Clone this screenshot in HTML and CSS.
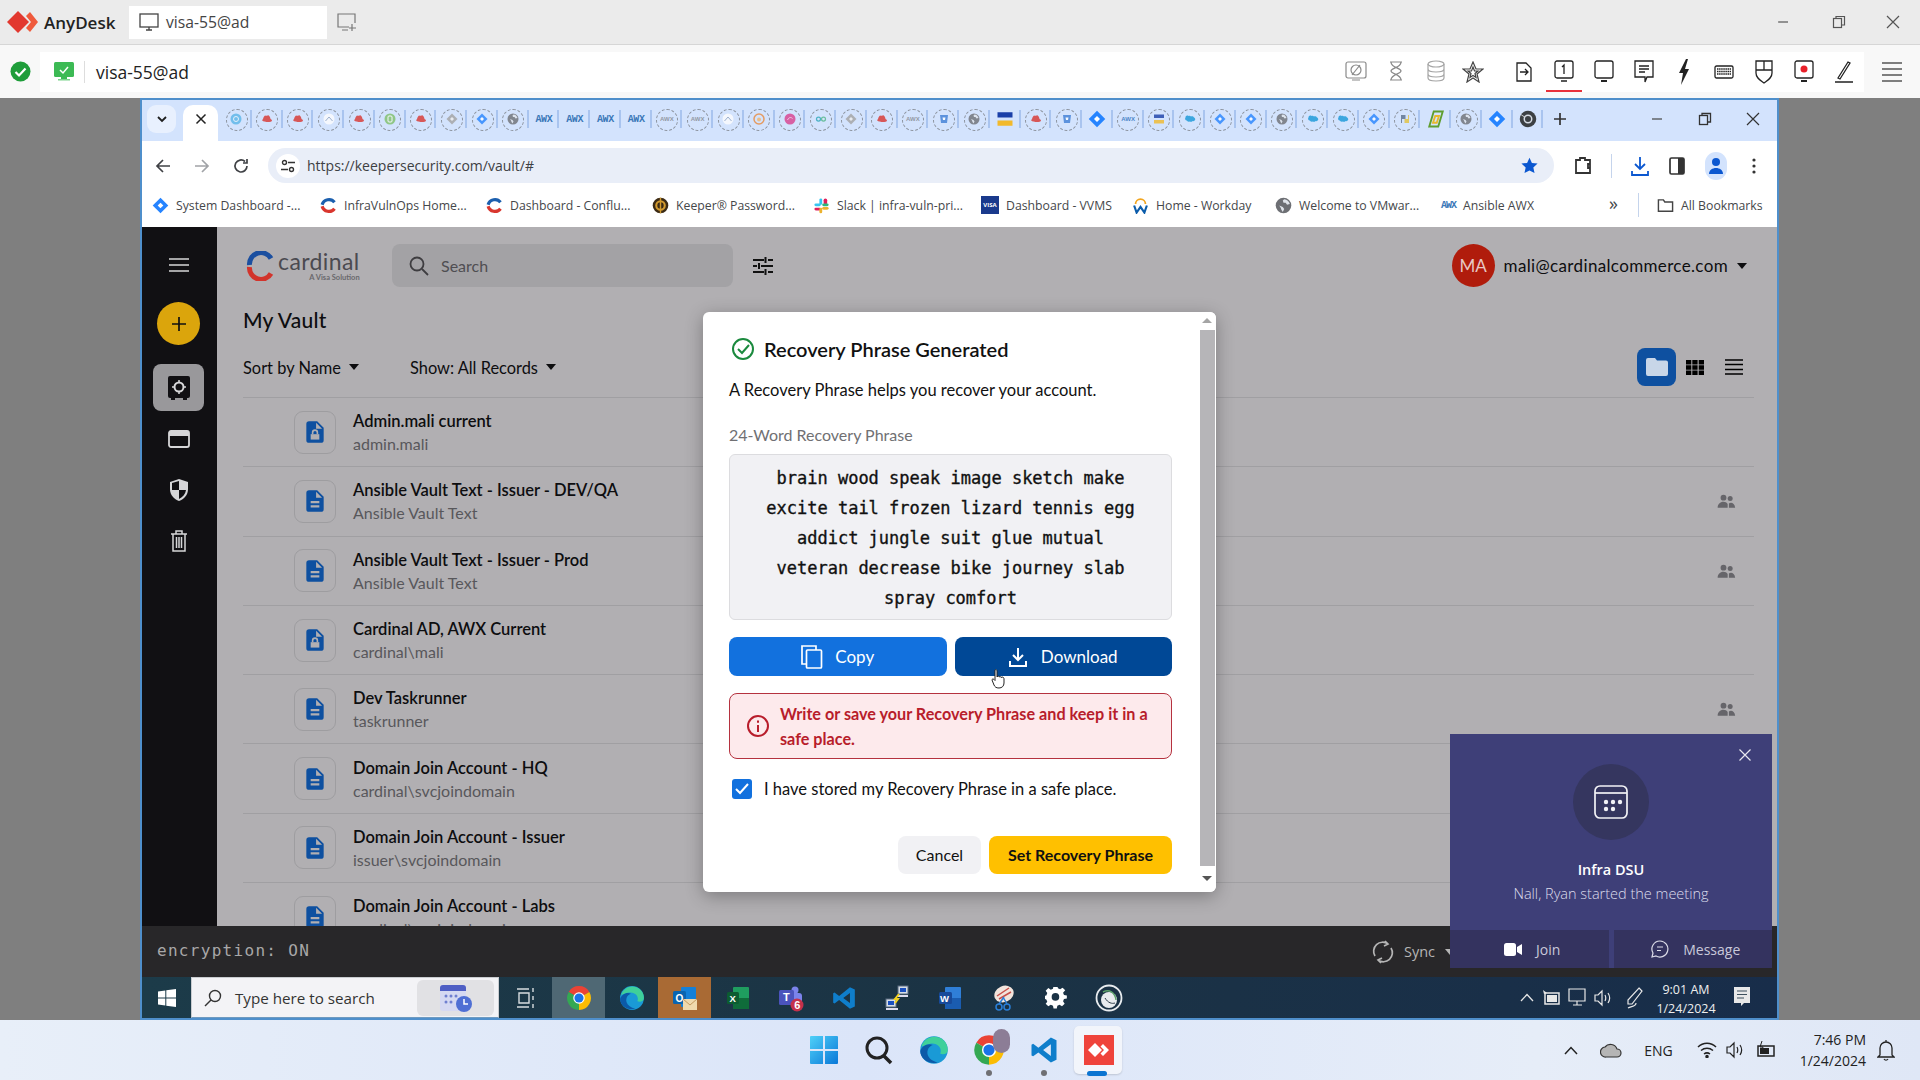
FILE: index.html
```html
<!DOCTYPE html>
<html lang="en">
<head>
    <meta charset="UTF-8">
    <title>AnyDesk - visa-55@ad</title>
    <link rel="stylesheet" href="styles.css">
</head>
<body>
<svg class="defs" width="0" height="0">
    <symbol id="i-redhat" viewBox="0 0 24 24"><path fill="#d8352f" d="M4 13c0-3 2-7 4-8 2 .8 5 .8 7-.4 2 1.4 3.600 4.400 4 7.400 2 1 3 2 3 3 0 2-4 3-9 3s-11-2-11-4c0-1 1-1.500 2-1z"/></symbol>
    <symbol id="i-diamond" viewBox="0 0 24 24"><path fill="#2684ff" d="M12 1l11 11-11 11L1 12z"/><path fill="#fff" d="M12 8l4 4-4 4-4-4z"/></symbol>
    <symbol id="i-graydiamond" viewBox="0 0 24 24"><path fill="#a3a3a3" d="M12 1l11 11-11 11L1 12z"/><path fill="#eee" d="M12 8l4 4-4 4-4-4z"/></symbol>
    <symbol id="i-globe" viewBox="0 0 24 24"><circle cx="12" cy="12" r="11" fill="#6d6f74"/><path fill="#dfe3ea" d="M13 3c4 .5 7 3 8 7l-4 1-2-3h-3l-1-3zM6 12l5 2 2 3-2 4-2-3-1-3z"/></symbol>
    <symbol id="i-cloud" viewBox="0 0 24 24"><path fill="#1798d8" d="M9 6c2-1 4 0 5 1 2-1 5 0 6 2 2 1 3 3 2 5s-3 3-5 2c-1 2-4 2-6 1-2 1-5 0-5-2-3 0-5-3-3-6 0-3 3-5 6-3z"/></symbol>
    <symbol id="i-shield" viewBox="0 0 24 24"><path fill="#3f7fd6" d="M4 4h16l-2 16H6z"/><path fill="#fff" d="M9 9h6l-1 5h-4z"/></symbol>
    <symbol id="i-flag" viewBox="0 0 24 24"><rect x="2" y="3" width="20" height="7" fill="#1a3fa8"/><rect x="2" y="14" width="20" height="7" fill="#f2b92b"/></symbol>
    <symbol id="i-peak" viewBox="0 0 24 24"><circle cx="12" cy="12" r="11" fill="#fdfdfd"/><path fill="none" stroke="#8fa4c4" stroke-width="2" d="M5 16l7-8 7 8"/></symbol>
    <symbol id="i-doc" viewBox="0 0 24 24"><path fill="#0e50a0" d="M14 2H6.500A2.500 2.500 0 0 0 4 4.500v15A2.500 2.500 0 0 0 6.500 22h11a2.500 2.500 0 0 0 2.500-2.500V8l-6-6zm2 16H8v-2h8v2zm0-4H8v-2h8v2zm-3-5V3.500L18.500 9H13z"/></symbol>
    <symbol id="i-doclock" viewBox="0 0 24 24"><path fill="#0e50a0" d="M14 2H6.500A2.500 2.500 0 0 0 4 4.500v15A2.500 2.500 0 0 0 6.500 22h11a2.500 2.500 0 0 0 2.500-2.500V8l-6-6zm-1 7V3.500L18.500 9H13z"/><path fill="#b1afb2" d="M8 14h8v5H8z"/><path fill="none" stroke="#b1afb2" stroke-width="1.500" d="M9.800 14v-1.500a2.200 2.200 0 0 1 4.400 0V14"/></symbol>
    <symbol id="i-people" viewBox="0 0 24 24"><circle cx="9" cy="8" r="3.500"/><circle cx="17" cy="9" r="3"/><path d="M2 20c0-4 3-7 7-7 2 0 4 1 5 2.500V20zM15.500 20v-5c2-2 7-1 7.500 5z"/></symbol>
    <symbol id="i-chrome" viewBox="0 0 24 24"><path fill="#ea4335" d="M12 12L2.470 6.500A11 11 0 0 1 21.530 6.500z"/><path fill="#fbbc04" d="M12 12l9.530-5.500A11 11 0 0 1 12 23z"/><path fill="#34a853" d="M12 12v11A11 11 0 0 1 2.470 6.500z"/><circle cx="12" cy="12" r="5.300" fill="#fff"/><circle cx="12" cy="12" r="4.200" fill="#1a73e8"/></symbol>
    <symbol id="i-vscode" viewBox="0 0 24 24"><path fill="#0f7ecb" d="M17.500 2L22 4.200v15.600L17.500 22 7.500 13.900 3.300 17 2 16.300V7.700L3.300 7l4.200 3.100zm0 5.300L11.300 12l6.200 4.700z"/></symbol>
    <symbol id="i-edge" viewBox="0 0 24 24"><circle cx="12" cy="12" r="11" fill="#1a9ad6"/><path fill="#3fd09a" d="M2 9C4 3 10 0 16 2c4 1.500 7 5 7 10 0 3-3 4-6 3 2-5-3-9-8-8-3 .5-5 2-7 2z"/><path fill="#0c5aa8" d="M1 13c1-4 6-7 10-5-3 1-5 4-4 8 1 3 4 5 8 6-7 2-14-3-14-9z"/></symbol>
    <symbol id="i-cpart" viewBox="0 0 24 24"><path fill="none" stroke="#1b5fae" stroke-width="4.500" d="M20.500 7.500A10 10 0 0 0 3 11"/><path fill="none" stroke="#d9362e" stroke-width="4.500" d="M3 13a10 10 0 0 0 17.500 3.500"/></symbol>
</svg>

<header class="ad-title">
    <svg class="ad-logo" width="31" height="26" viewBox="0 0 31 26"><path fill="#e2382f" d="M11 2l11 11-11 11L0 13z"/><path fill="#ef5a3c" d="M23 3l8 10-8 10-4-4 5-6-5-6z"/></svg>
    <span class="ad-name">AnyDesk</span>
    <div class="ad-tab">
        <svg width="20" height="20" viewBox="0 0 20 20" fill="none" stroke="#444" stroke-width="1.300"><rect x="1" y="2" width="18" height="13"/><path d="M7 18h6M10 15v3"/></svg>
        <span>visa-55@ad</span>
    </div>
    <svg class="ad-newtab" width="22" height="22" viewBox="0 0 22 22" fill="none" stroke="#777" stroke-width="1.200"><path d="M13 16H2V3h17v9"/><path d="M6 19h6M16 13v7M13 17h7"/></svg>
    <div class="win-ctrl">
        <span><svg width="12" height="12" viewBox="0 0 12 12" stroke="#555" stroke-width="1.200"><path d="M1 6h10"/></svg></span>
        <span><svg width="14" height="14" viewBox="0 0 14 14" fill="none" stroke="#555" stroke-width="1.200"><rect x="1.500" y="3.500" width="8" height="9"/><path d="M4 3V1.500h8.500V10H10"/></svg></span>
        <span><svg width="14" height="14" viewBox="0 0 14 14" stroke="#555" stroke-width="1.200"><path d="M1 1l12 12M13 1L1 13"/></svg></span>
    </div>
</header>

<div class="ad-toolbar">
    <svg class="ad-ok" width="21" height="21" viewBox="0 0 21 21"><circle cx="10.500" cy="10.500" r="10" fill="#1f9d3a"/><path d="M5.500 11l3.500 3.500 6.500-7" fill="none" stroke="#fff" stroke-width="2.200"/></svg>
    <div class="ad-field">
        <svg class="ad-mon" width="20" height="20" viewBox="0 0 20 20"><rect x="0" y="0" width="20" height="15" rx="1.500" fill="#3cba54"/><rect x="7" y="15" width="6" height="2" fill="#3cba54"/><rect x="4" y="17" width="12" height="1.500" fill="#7ad48c"/><path d="M6 8l3 3 5-6" fill="none" stroke="#fff" stroke-width="1.500"/></svg>
        <span class="ad-sep"></span>
        <span class="ad-addr">visa-55@ad</span>
        <div class="ad-tools ad-tools-dim">
            <span><svg width="22" height="24" viewBox="0 0 22 24" fill="none" stroke="#8a8a8a" stroke-width="1.200"><rect x="1" y="2" width="20" height="16" rx="2"/><path d="M7 20h8M15 5L7 15"/><circle cx="11" cy="10" r="5"/></svg></span>
            <span><svg width="16" height="24" viewBox="0 0 16 24" fill="none" stroke="#8a8a8a" stroke-width="1.200"><path d="M2 2h12M2 20h12M3 2c0 6 10 6 10 9s-10 3-10 9M13 2c0 6-10 6-10 9s10 3 10 9"/></svg></span>
            <span><svg width="20" height="24" viewBox="0 0 20 24" fill="none" stroke="#a5a5a5" stroke-width="1.200"><ellipse cx="10" cy="4" rx="8" ry="3"/><path d="M2 4v14c0 4 16 4 16 0V4M2 9c0 4 16 4 16 0M2 14c0 4 16 4 16 0"/></svg></span>
            <span><svg width="22" height="22" viewBox="0 0 22 22" fill="none" stroke="#444" stroke-width="1.200"><path d="M11 1l3 7h7l-6 5 2 8-6-4-6 4 2-8-6-5h7z"/><path d="M11 6l1.500 4h3.500l-3 2.500 1 4-3-2-3 2 1-4-3-2.500h3.500z"/></svg></span>
        </div>
        <div class="ad-tools">
            <span><svg width="16" height="24" viewBox="0 0 16 24" fill="none" stroke="#222" stroke-width="1.300"><path d="M1 3h9l5 5v13H1z"/><path d="M4 12h8M9 9l3 3-3 3"/></svg></span>
            <span class="ad-active"><svg width="20" height="24" viewBox="0 0 20 24" fill="none" stroke="#222" stroke-width="1.300"><rect x="1" y="1" width="18" height="17" rx="2"/><path d="M7 21h6M10 14V5L8 7"/></svg></span>
            <span><svg width="20" height="24" viewBox="0 0 20 24" fill="none" stroke="#222" stroke-width="1.300"><rect x="1" y="1" width="18" height="17" rx="2"/><path d="M7 21h6" stroke-width="2"/></svg></span>
            <span><svg width="20" height="24" viewBox="0 0 20 24" fill="none" stroke="#222" stroke-width="1.300"><path d="M1 1h18v16h-6l-2 5v-5H1zM5 6h10M5 9h10M5 12h6"/></svg></span>
            <span><svg width="12" height="26" viewBox="0 0 12 26" fill="#222"><path d="M8 0L1 14h4l-2 12 8-16H7l3-10z"/></svg></span>
            <span><svg width="20" height="14" viewBox="0 0 20 14" fill="none" stroke="#222" stroke-width="1.300"><rect x="1" y="1" width="18" height="12" rx="1.500"/><path d="M3 4h14M3 6.500h14M3 9h14" stroke-dasharray="1.500 .6"/></svg></span>
            <span><svg width="18" height="24" viewBox="0 0 18 24" fill="none" stroke="#222" stroke-width="1.300"><path d="M1 1h16v12c0 5-4 7-8 10-4-3-8-5-8-10zM1 10h16M9 1v9"/></svg></span>
            <span><svg width="20" height="24" viewBox="0 0 20 24" fill="none" stroke="#222" stroke-width="1.300"><rect x="1" y="1" width="18" height="17" rx="2"/><circle cx="10" cy="9" r="3.500" fill="#e8202a" stroke="none"/><path d="M7 21h6" stroke-width="2"/></svg></span>
            <span><svg width="20" height="24" viewBox="0 0 20 24" fill="none" stroke="#222" stroke-width="1.300"><path d="M4 18L14 2l2 1L6 19zM1 22h18"/></svg></span>
        </div>
    </div>
    <svg class="ad-menu" width="24" height="24" viewBox="0 0 24 24" stroke="#555" stroke-width="1.500"><path d="M2 3h20M2 9h20M2 15h20M2 21h20"/></svg>
</div>

<main class="desk">
    <div class="chrome">
        <div class="tabstrip">
            <button class="tab-list"><svg width="12" height="12" viewBox="0 0 12 12" fill="none" stroke="#1f1f1f" stroke-width="1.800"><path d="M2 4l4 4 4-4"/></svg></button>
            <div class="tab-active"><svg width="12" height="12" viewBox="0 0 12 12" stroke="#222" stroke-width="1.500"><path d="M1.500 1.500l9 9M10.500 1.500l-9 9"/></svg></div>
            <div class="tabs">
                <span class="tab ring"><svg viewBox="0 0 24 24"><circle cx="12" cy="12" r="11" fill="#5bb6e8"/><circle cx="12" cy="12" r="5" fill="none" stroke="#e8f4fb" stroke-width="2"/></svg></span>
                <span class="tab ring"><svg><use href="#i-redhat"/></svg></span>
                <span class="tab ring"><svg><use href="#i-redhat"/></svg></span>
                <span class="tab ring"><svg><use href="#i-peak"/></svg></span>
                <span class="tab ring"><svg><use href="#i-redhat"/></svg></span>
                <span class="tab ring"><svg viewBox="0 0 24 24"><circle cx="12" cy="12" r="11" fill="#7fc06a"/><rect x="8" y="6" width="8" height="12" rx="2" fill="none" stroke="#fff" stroke-width="2"/></svg></span>
                <span class="tab ring"><svg><use href="#i-redhat"/></svg></span>
                <span class="tab ring"><svg><use href="#i-graydiamond"/></svg></span>
                <span class="tab ring"><svg><use href="#i-diamond"/></svg></span>
                <span class="tab ring"><svg><use href="#i-globe"/></svg></span>
                <span class="tab tab-text">AWX</span>
                <span class="tab tab-text">AWX</span>
                <span class="tab tab-text">AWX</span>
                <span class="tab tab-text">AWX</span>
                <span class="tab ring ring-text">AWX</span>
                <span class="tab ring ring-text">AWX</span>
                <span class="tab ring"><svg><use href="#i-peak"/></svg></span>
                <span class="tab ring"><svg viewBox="0 0 24 24"><circle cx="12" cy="12" r="10" fill="none" stroke="#e98a3c" stroke-width="3"/><circle cx="12" cy="13" r="4" fill="#f2b66d"/></svg></span>
                <span class="tab ring"><svg viewBox="0 0 24 24"><circle cx="12" cy="12" r="11" fill="#d8408e"/><path d="M7 14c3-6 7-6 10-3" fill="none" stroke="#f6c5dd" stroke-width="2"/></svg></span>
                <span class="tab ring"><svg viewBox="0 0 24 24" fill="none" stroke-width="2.500"><circle cx="7" cy="12" r="4" stroke="#2aa6b8"/><circle cx="17" cy="12" r="4" stroke="#52b788"/></svg></span>
                <span class="tab ring"><svg><use href="#i-graydiamond"/></svg></span>
                <span class="tab ring"><svg><use href="#i-redhat"/></svg></span>
                <span class="tab ring ring-text">AWX</span>
                <span class="tab ring"><svg><use href="#i-shield"/></svg></span>
                <span class="tab ring"><svg><use href="#i-globe"/></svg></span>
                <span class="tab plain"><svg><use href="#i-flag"/></svg></span>
                <span class="tab ring"><svg><use href="#i-redhat"/></svg></span>
                <span class="tab ring"><svg><use href="#i-shield"/></svg></span>
                <span class="tab plain"><svg><use href="#i-diamond"/></svg></span>
                <span class="tab ring ring-text ring-blue">AWX</span>
                <span class="tab ring"><svg><use href="#i-flag"/></svg></span>
                <span class="tab ring"><svg><use href="#i-cloud"/></svg></span>
                <span class="tab ring"><svg><use href="#i-diamond"/></svg></span>
                <span class="tab ring"><svg><use href="#i-diamond"/></svg></span>
                <span class="tab ring"><svg><use href="#i-globe"/></svg></span>
                <span class="tab ring"><svg><use href="#i-cloud"/></svg></span>
                <span class="tab ring"><svg><use href="#i-cloud"/></svg></span>
                <span class="tab ring"><svg><use href="#i-diamond"/></svg></span>
                <span class="tab ring"><svg viewBox="0 0 24 24"><path fill="#5a6f8c" d="M4 4h9v8H6v8H4z"/><path fill="#e3c23c" d="M20 20h-9v-8h7V4h2z"/></svg></span>
                <span class="tab plain"><svg viewBox="0 0 24 24" fill="none" stroke-width="2.500"><path stroke="#5f9e2f" d="M9 2h12l-6 20H3z"/><path stroke="#e8b92b" d="M11 8h5l-3 9H8z"/></svg></span>
                <span class="tab ring"><svg><use href="#i-globe"/></svg></span>
                <span class="tab plain"><svg><use href="#i-diamond"/></svg></span>
                <span class="tab plain"><svg viewBox="0 0 24 24"><circle cx="12" cy="12" r="11" fill="#3c4043"/><path d="M12 12L3 6.500" stroke="#fff"/><circle cx="12" cy="12" r="5" fill="#3c4043" stroke="#d6dbe3" stroke-width="2"/></svg></span>
            </div>
            <svg class="tab-new" width="14" height="14" viewBox="0 0 14 14" stroke="#333" stroke-width="1.700"><path d="M7 1v12M1 7h12"/></svg>
            <div class="win-ctrl win-ctrl-small">
                <span><svg width="12" height="12" viewBox="0 0 12 12" stroke="#444" stroke-width="1.200"><path d="M1 6h10"/></svg></span>
                <span><svg width="14" height="14" viewBox="0 0 14 14" fill="none" stroke="#333" stroke-width="1.300"><rect x="1.500" y="3.500" width="8" height="9"/><path d="M4 3V1.500h8.500V10H10"/></svg></span>
                <span><svg width="14" height="14" viewBox="0 0 14 14" stroke="#333" stroke-width="1.200"><path d="M1 1l12 12M13 1L1 13"/></svg></span>
            </div>
        </div>

        <div class="navbar">
            <svg class="nav-btn" width="16" height="16" viewBox="0 0 16 16" fill="none" stroke="#3f4145" stroke-width="1.700"><path d="M15 8H2M8 2L2 8l6 6"/></svg>
            <svg class="nav-btn" width="16" height="16" viewBox="0 0 16 16" fill="none" stroke="#a1a3a7" stroke-width="1.700"><path d="M1 8h13M8 2l6 6-6 6"/></svg>
            <svg class="nav-btn" width="16" height="16" viewBox="0 0 16 16" fill="none" stroke="#3f4145" stroke-width="1.700"><path d="M14 8a6 6 0 1 1-2-4.500M14 1v4h-4"/></svg>
            <div class="omnibox">
                <span class="omni-tune"><svg width="14" height="14" viewBox="0 0 14 14" fill="none" stroke="#333" stroke-width="1.400"><circle cx="3.500" cy="3.500" r="2"/><path d="M7 3.500h7M0 10.500h7"/><circle cx="10.500" cy="10.500" r="2"/></svg></span>
                <span class="omni-url">https://keepersecurity.com/vault/#</span>
                <svg class="omni-star" width="17" height="17" viewBox="0 0 24 24" fill="#0b57d0"><path d="M12 1l3.400 7.400 8 .9-6 5.400 1.700 8L12 19l-7.100 3.700 1.700-8-6-5.400 8-.9z"/></svg>
            </div>
            <div class="nav-right">
                <svg width="20" height="20" viewBox="0 0 20 20" fill="none" stroke="#333" stroke-width="1.800"><path d="M7 4V2h5v2h5v13H3V4zM17 8h-2v4h2"/></svg>
                <span class="nav-sep"></span>
                <svg width="18" height="20" viewBox="0 0 18 20" fill="none" stroke="#0b57d0" stroke-width="1.800"><path d="M9 1v11M4 8l5 5 5-5M1 15v4h16v-4"/></svg>
                <svg width="16" height="18" viewBox="0 0 16 18"><rect x="1" y="1" width="14" height="16" rx="1.500" fill="none" stroke="#333" stroke-width="1.700"/><rect x="9" y="1" width="6" height="16" fill="#333"/></svg>
                <span class="nav-avatar"><svg width="16" height="18" viewBox="0 0 16 18" fill="#0b57d0"><circle cx="8" cy="5" r="4"/><path d="M1 17c0-8 14-8 14 0z"/></svg></span>
                <svg width="4" height="16" viewBox="0 0 4 16" fill="#333"><circle cx="2" cy="2" r="1.600"/><circle cx="2" cy="8" r="1.600"/><circle cx="2" cy="14" r="1.600"/></svg>
            </div>
        </div>

        <div class="bookmarks">
            <span class="bm"><svg><use href="#i-diamond"/></svg>System Dashboard -...</span>
            <span class="bm"><svg><use href="#i-cpart"/></svg>InfraVulnOps Home...</span>
            <span class="bm"><svg><use href="#i-cpart"/></svg>Dashboard - Conflu...</span>
            <span class="bm"><svg viewBox="0 0 24 24"><circle cx="12" cy="12" r="11" fill="#3b2a14"/><circle cx="12" cy="12" r="6" fill="none" stroke="#d29a2e" stroke-width="3"/><path d="M12 1v22" stroke="#d29a2e" stroke-width="2"/></svg>Keeper® Password...</span>
            <span class="bm"><svg viewBox="0 0 24 24"><rect x="9" y="2" width="4" height="9" rx="2" fill="#36c5f0"/><rect x="2" y="9" width="9" height="4" rx="2" fill="#36c5f0"/><rect x="15" y="2" width="5" height="9" rx="2.500" fill="#e01e5a"/><rect x="13" y="9" width="9" height="4" rx="2" fill="#2eb67d"/><rect x="13" y="14" width="9" height="4" rx="2" fill="#ecb22e"/><rect x="2" y="15" width="9" height="4" rx="2" fill="#e01e5a"/><rect x="9" y="15" width="4" height="8" rx="2" fill="#ecb22e"/></svg>Slack | infra-vuln-pri...</span>
            <span class="bm"><span class="bm-visa">VISA</span>Dashboard - VVMS</span>
            <span class="bm"><svg viewBox="0 0 24 24"><path d="M5 10a7 7 0 0 1 14 0" fill="none" stroke="#f2a51f" stroke-width="2.500"/><path d="M3 12l3.500 10L12 14l5.500 8L21 12" fill="none" stroke="#0b5cab" stroke-width="3"/></svg>Home - Workday</span>
            <span class="bm"><svg><use href="#i-globe"/></svg>Welcome to VMwar...</span>
            <span class="bm"><span class="bm-awx">AWX</span>Ansible AWX</span>
            <span class="bm-more">»</span>
            <span class="nav-sep"></span>
            <span class="bm bm-all"><svg viewBox="0 0 24 24" fill="none" stroke="#444" stroke-width="2"><path d="M2 20V4h7l2 3h11v13z"/></svg>All Bookmarks</span>
        </div>

        <div class="app">
            <aside class="rail">
                <svg class="rail-burger" width="20" height="14" viewBox="0 0 20 14" stroke="#d6d6d8" stroke-width="1.700"><path d="M0 1h20M0 7h20M0 13h20"/></svg>
                <span class="rail-add"><svg width="18" height="18" viewBox="0 0 18 18" stroke="#111" stroke-width="1.700"><path d="M9 2v14M2 9h14"/></svg></span>
                <span class="rail-item rail-active"><svg width="24" height="26" viewBox="0 0 24 26"><rect x="1" y="1" width="22" height="22" rx="2" fill="#111013"/><path d="M4 23h4v2H4zM16 23h4v2h-4z" fill="#111013"/><circle cx="12" cy="12" r="4.500" fill="none" stroke="#d8d8da" stroke-width="2"/><path d="M12 5v3M12 16v3M5 12h3M16 12h3" stroke="#d8d8da" stroke-width="1.500"/></svg></span>
                <span class="rail-item"><svg width="22" height="18" viewBox="0 0 22 18"><rect x="1" y="1" width="20" height="16" rx="2" fill="none" stroke="#d6d6d8" stroke-width="1.800"/><rect x="1" y="2" width="20" height="4" fill="#d6d6d8"/></svg></span>
                <span class="rail-item"><svg width="20" height="24" viewBox="0 0 20 24"><path d="M10 1l9 3v7c0 6-4 10-9 12-5-2-9-6-9-12V4z" fill="#d6d6d8"/><path d="M10 3v9H3c0 0 0 0 0-1V5zM10 12h7c-.5 4-3 7-7 9z" fill="#111013"/></svg></span>
                <span class="rail-item"><svg width="18" height="22" viewBox="0 0 18 22" fill="none" stroke="#d6d6d8" stroke-width="1.500"><path d="M1 4h16M6 4V1h6v3M3 4v17h12V4M6.500 7v11M9 7v11M11.500 7v11"/></svg></span>
            </aside>
            <section class="vault">
                <div class="vault-top">
                    <div class="brand">
                        <svg width="30" height="30" viewBox="0 0 30 30" fill="none" stroke-width="5"><path stroke="#1b4fa0" d="M25 7.500A11.500 11.500 0 0 0 3.500 14"/><path stroke="#d2342c" d="M3.500 16A11.500 11.500 0 0 0 25 22.500"/></svg>
                        <div class="brand-text"><span class="brand-name">cardinal</span><span class="brand-sub">A Visa Solution</span></div>
                    </div>
                    <div class="search">
                        <svg width="20" height="20" viewBox="0 0 20 20" fill="none" stroke="#3e3d40" stroke-width="1.800"><circle cx="8" cy="8" r="6.500"/><path d="M13 13l6 6"/></svg>
                        <span>Search</span>
                    </div>
                    <svg class="filter" width="20" height="18" viewBox="0 0 20 18" stroke="#111" stroke-width="2"><path d="M0 3h11M15 3h5M0 9h4M8 9h12M0 15h11M15 15h5M12.500 0v6M6 6v6M12.500 12v6"/></svg>
                    <div class="user">
                        <span class="avatar">MA</span>
                        <span class="email">mali@cardinalcommerce.com</span>
                        <span class="caret"></span>
                    </div>
                </div>
                <h1 class="vault-title">My Vault</h1>
                <div class="vault-sort">
                    <span class="sort-item">Sort by Name<span class="caret"></span></span>
                    <span class="sort-item">Show: All Records<span class="caret"></span></span>
                    <div class="views">
                        <span class="view-on"><svg width="22" height="18" viewBox="0 0 22 18" fill="#c8d6e8"><path d="M2 0h7l2 2.500h9a2 2 0 0 1 2 2V16a2 2 0 0 1-2 2H2a2 2 0 0 1-2-2V2a2 2 0 0 1 2-2z"/></svg></span>
                        <svg width="18" height="15" viewBox="0 0 18 15" fill="#000"><path d="M0 0h5.300v4.500H0zM6.300 0h5.300v4.500H6.300zM12.700 0H18v4.500h-5.300zM0 5.300h5.300v4.400H0zM6.300 5.300h5.300v4.400H6.300zM12.700 5.300H18v4.400h-5.300zM0 10.500h5.300V15H0zM6.300 10.500h5.300V15H6.300zM12.700 10.500H18V15h-5.300z"/></svg>
                        <svg width="18" height="16" viewBox="0 0 18 16" stroke="#000" stroke-width="1.600"><path d="M0 1h18M0 5.500h18M0 10.500h18M0 15h18"/></svg>
                    </div>
                </div>
                <ul class="records">
                    <li class="record">
                        <span class="rec-icon"><svg><use href="#i-doclock"/></svg></span>
                        <div><div class="rec-name">Admin.mali current</div><div class="rec-sub">admin.mali</div></div>
                    </li>
                    <li class="record">
                        <span class="rec-icon"><svg><use href="#i-doc"/></svg></span>
                        <div><div class="rec-name">Ansible Vault Text - Issuer - DEV/QA</div><div class="rec-sub">Ansible Vault Text</div></div>
                        <svg class="rec-share"><use href="#i-people"/></svg>
                    </li>
                    <li class="record">
                        <span class="rec-icon"><svg><use href="#i-doc"/></svg></span>
                        <div><div class="rec-name">Ansible Vault Text - Issuer - Prod</div><div class="rec-sub">Ansible Vault Text</div></div>
                        <svg class="rec-share"><use href="#i-people"/></svg>
                    </li>
                    <li class="record">
                        <span class="rec-icon"><svg><use href="#i-doclock"/></svg></span>
                        <div><div class="rec-name">Cardinal AD, AWX Current</div><div class="rec-sub">cardinal\mali</div></div>
                    </li>
                    <li class="record">
                        <span class="rec-icon"><svg><use href="#i-doc"/></svg></span>
                        <div><div class="rec-name">Dev Taskrunner</div><div class="rec-sub">taskrunner</div></div>
                        <svg class="rec-share"><use href="#i-people"/></svg>
                    </li>
                    <li class="record">
                        <span class="rec-icon"><svg><use href="#i-doc"/></svg></span>
                        <div><div class="rec-name">Domain Join Account - HQ</div><div class="rec-sub">cardinal\svcjoindomain</div></div>
                    </li>
                    <li class="record">
                        <span class="rec-icon"><svg><use href="#i-doc"/></svg></span>
                        <div><div class="rec-name">Domain Join Account - Issuer</div><div class="rec-sub">issuer\svcjoindomain</div></div>
                    </li>
                    <li class="record">
                        <span class="rec-icon"><svg><use href="#i-doc"/></svg></span>
                        <div><div class="rec-name">Domain Join Account - Labs</div><div class="rec-sub">cardinal\svcjoindomain</div></div>
                    </li>
                </ul>
            </section>
        </div>

        <div class="remote-bar">
            <span class="encryption">encryption: ON</span>
            <span class="sync">
                <svg width="22" height="24" viewBox="0 0 22 24" fill="none" stroke="#b5b5b5" stroke-width="1.700"><path d="M3 16A9 9 0 0 1 16 4M19 8a9 9 0 0 1-13 12M13 1l3 3-4 2M9 23l-3-3 4-2"/></svg>
                <span>Sync</span><span class="caret caret-light"></span>
            </span>
        </div>

        <div class="win10bar">
            <span class="start"><svg width="18" height="18" viewBox="0 0 18 18" fill="#fff"><path d="M0 2.500l7.300-1v7H0zM8.300 1.300L18 0v8.500H8.300zM0 9.500h7.300v7L0 15.500zM8.300 9.500H18V18l-9.700-1.300z"/></svg></span>
            <div class="w10-search">
                <svg width="18" height="18" viewBox="0 0 18 18" fill="none" stroke="#333" stroke-width="1.400"><circle cx="11" cy="7" r="5.500"/><path d="M7 11l-6 6"/></svg>
                <span>Type here to search</span>
                <span class="w10-cal"><svg width="36" height="30" viewBox="0 0 36 30"><rect x="2" y="2" width="26" height="26" rx="3" fill="#d5d9f2"/><path d="M2 5a3 3 0 0 1 3-3h20a3 3 0 0 1 3 3v3H2z" fill="#4f5fc4"/><g fill="#6f7fd0"><circle cx="8" cy="13" r="1.500"/><circle cx="13" cy="13" r="1.500"/><circle cx="18" cy="13" r="1.500"/><circle cx="8" cy="19" r="1.500"/><circle cx="13" cy="19" r="1.500"/></g><circle cx="26" cy="21" r="8" fill="#4f6fd4"/><path d="M26 16v5h4" fill="none" stroke="#fff" stroke-width="1.500"/></svg></span>
            </div>
            <span class="w10-app"><svg width="20" height="24" viewBox="0 0 20 24" fill="none" stroke="#d8dde0" stroke-width="1.400"><path d="M1 3h12M1 21h12M3 7h10v10H3zM17 2v4M17 10v4M17 18v4"/></svg></span>
            <span class="w10-app w10-hl"><svg width="26" height="26"><use href="#i-chrome"/></svg></span>
            <span class="w10-app"><svg width="26" height="26"><use href="#i-edge"/></svg></span>
            <span class="w10-app w10-hl-orange"><svg width="26" height="26" viewBox="0 0 26 26"><rect x="9" y="2" width="15" height="20" rx="1" fill="#1480d8"/><rect x="1" y="6" width="13" height="13" rx="1.500" fill="#0a64b0"/><text x="3.500" y="16.500" font-family="Liberation Sans" font-size="10" font-weight="700" fill="#fff">O</text><path d="M11 14h14v11H11z" fill="#f0d9ad"/><path d="M11 14l7 6 7-6" fill="none" stroke="#c49a60"/></svg></span>
            <span class="w10-app"><svg width="26" height="26" viewBox="0 0 26 26"><rect x="8" y="2" width="16" height="22" rx="1" fill="#1f9d5f"/><rect x="8" y="13" width="16" height="11" fill="#0f6b3a"/><rect x="2" y="7" width="12" height="12" rx="1.500" fill="#0c5c31"/><text x="4.500" y="16.500" font-family="Liberation Sans" font-size="9.500" font-weight="700" fill="#fff">X</text></svg></span>
            <span class="w10-app"><svg width="28" height="28" viewBox="0 0 28 28"><circle cx="18" cy="6" r="3.500" fill="#7b83eb"/><rect x="13" y="9" width="12" height="11" rx="3" fill="#7b83eb"/><rect x="2" y="6" width="15" height="15" rx="1.500" fill="#4b53bc"/><text x="6" y="17" font-family="Liberation Sans" font-size="11" font-weight="700" fill="#fff">T</text><circle cx="20" cy="21" r="6.500" fill="#c4314b"/><text x="17.200" y="25" font-family="Liberation Sans" font-size="11" font-weight="700" fill="#fff">6</text></svg></span>
            <span class="w10-app"><svg width="26" height="26"><use href="#i-vscode"/></svg></span>
            <span class="w10-app"><svg width="28" height="28" viewBox="0 0 28 28"><rect x="15" y="2" width="10" height="8" fill="#d5dde5" stroke="#5a6a80"/><rect x="17" y="4" width="6" height="4" fill="#1a50c0"/><rect x="3" y="15" width="10" height="8" fill="#d5dde5" stroke="#5a6a80"/><rect x="5" y="17" width="6" height="4" fill="#1a50c0"/><path d="M3 25h12M15 12h10" stroke="#dde" stroke-width="2"/><path d="M16 10l-4 5h3l-3 4" stroke="#f3d21f" fill="none" stroke-width="2"/></svg></span>
            <span class="w10-app"><svg width="26" height="26" viewBox="0 0 26 26"><rect x="8" y="2" width="16" height="22" rx="1" fill="#2f7fd8"/><rect x="8" y="13" width="16" height="11" fill="#1a5cb0"/><rect x="2" y="7" width="13" height="12" rx="1.500" fill="#174a9a"/><text x="3" y="16.500" font-family="Liberation Sans" font-size="9.500" font-weight="700" fill="#fff">W</text></svg></span>
            <span class="w10-app"><svg width="28" height="28" viewBox="0 0 28 28"><ellipse cx="15" cy="10" rx="10" ry="8" transform="rotate(-25 15 10)" fill="#f2e4dc"/><path d="M8 12L20 4M10 15L22 8" stroke="#c8504a" stroke-width="1.500"/><circle cx="10" cy="23" r="3" fill="none" stroke="#2b7fd8" stroke-width="1.500"/><circle cx="18" cy="23" r="3" fill="none" stroke="#2b7fd8" stroke-width="1.500"/><path d="M10 20l5-7M18 20l-4-7" stroke="#2b7fd8" stroke-width="1.500"/></svg></span>
            <span class="w10-app"><svg width="22" height="22" viewBox="0 0 22 22"><path fill="#fff" fill-rule="evenodd" d="M9 0h4l.6 3 2.300 1 2.600-1.700 2.800 2.800L19 7.600l1 2.400 3 .6v3l-3 .6-1 2.300 1.700 2.600-2.800 2.800-2.600-1.700-2.300 1-.6 3H9l-.6-3-2.300-1-2.600 1.700-2.800-2.800L2.400 17l-1-2.300L-1 14v-3l2.400-.6 1-2.400-1.700-2.500 2.800-2.800 2.600 1.700 2.300-1zM11 8a4 4 0 1 0 0 8 4 4 0 0 0 0-8z" transform="translate(0 -1.500) scale(.95)"/></svg></span>
            <span class="w10-app"><svg width="28" height="28" viewBox="0 0 28 28" fill="none"><circle cx="14" cy="14" r="12.500" stroke="#e8ecef" stroke-width="1.800"/><circle cx="14" cy="16" r="8" fill="#e8ecef"/><path d="M8 8c6-3 12 0 13 8" stroke="#5da36c" stroke-width="1.500"/><path d="M10 14c3 5 7 6 10 5" stroke="#2d3d48"/></svg></span>
            <div class="w10-tray">
                <svg width="14" height="9" viewBox="0 0 14 9" fill="none" stroke="#e6e6e6" stroke-width="1.300"><path d="M1 8l6-6.500L13 8"/></svg>
                <svg width="18" height="20" viewBox="0 0 18 20" fill="#e8e8e8"><rect x="3" y="5" width="14" height="11" fill="none" stroke="#e8e8e8" stroke-width="1.500"/><rect x="5" y="7" width="10" height="7"/><path d="M1 2l4 3-3 1z"/></svg>
                <svg width="18" height="20" viewBox="0 0 18 20" fill="none" stroke="#e8e8e8" stroke-width="1.200"><path d="M1 1h16v12H1zM5 17h9M9 13v4"/></svg>
                <svg width="18" height="18" viewBox="0 0 18 18" fill="none" stroke="#e8e8e8" stroke-width="1.200"><path d="M1 6h3l4-4v14l-4-4H1zM11 6c1 2 1 4 0 6M14 4c2 3 2 7 0 10"/></svg>
                <svg class="tray-pen" width="18" height="22" viewBox="0 0 18 22" fill="none" stroke="#e8e8e8" stroke-width="1.200"><path d="M14 1l3 3L7 17H3v-4zM3 21c3-2 8-1 8-5"/></svg>
                <div class="w10-clock"><span>9:01 AM</span><span>1/24/2024</span></div>
                <svg class="tray-note" width="20" height="24" viewBox="0 0 20 24"><path d="M1 1h16v16h-6l-3 3v-3H1z" fill="#e8e8e8"/><path d="M4 5h10M4 8.500h10M4 12h7" stroke="#3d4f5c"/></svg>
            </div>
        </div>

        <!-- overlays on the remote session -->
        <div class="modal">
            <div class="modal-body">
                <div class="modal-title">
                    <svg width="24" height="24" viewBox="0 0 24 24" fill="none" stroke="#1b8a3e" stroke-width="2"><circle cx="12" cy="12" r="10"/><path d="M7 12l4 4 7-8"/></svg>
                    <span>Recovery Phrase Generated</span>
                </div>
                <p class="modal-desc">A Recovery Phrase helps you recover your account.</p>
                <div class="modal-label">24-Word Recovery Phrase</div>
                <div class="phrase">
                    brain wood speak image sketch make<br>
                    excite tail frozen lizard tennis egg<br>
                    addict jungle suit glue mutual<br>
                    veteran decrease bike journey slab<br>
                    spray comfort
                </div>
                <div class="phrase-btns">
                    <button class="btn btn-copy"><svg width="22" height="24" viewBox="0 0 22 24" fill="none" stroke="#fff" stroke-width="1.700"><path d="M5 19H1V1h14v4"/><rect x="5.500" y="5" width="15" height="18" rx="1"/></svg>Copy</button>
                    <button class="btn btn-download"><svg width="18" height="20" viewBox="0 0 18 20" fill="none" stroke="#fff" stroke-width="2"><path d="M9 1v12M4 8l5 5 5-5M1 14v5h16v-5"/></svg>Download</button>
                </div>
                <div class="alert">
                    <svg width="24" height="24" viewBox="0 0 24 24" fill="none" stroke="#b81d2b" stroke-width="2"><circle cx="12" cy="12" r="10"/><path d="M12 11v7M12 6.500v2.200"/></svg>
                    <span>Write or save your Recovery Phrase and keep it in a safe place.</span>
                </div>
                <label class="stored">
                    <span class="check"><svg width="14" height="12" viewBox="0 0 14 12" fill="none" stroke="#fff" stroke-width="2"><path d="M1 6l4 4 8-9"/></svg></span>
                    I have stored my Recovery Phrase in a safe place.
                </label>
                <div class="modal-actions">
                    <button class="btn btn-cancel">Cancel</button>
                    <button class="btn btn-set">Set Recovery Phrase</button>
                </div>
            </div>
            <div class="modal-scroll">
                <span class="arrow-up"></span>
                <span class="scroll-thumb"></span>
                <span class="arrow-down"></span>
            </div>
        </div>

        <div class="toast">
            <svg class="toast-close" width="14" height="14" viewBox="0 0 14 14" stroke="#e8e8f0" stroke-width="1.200"><path d="M1.500 1.500l11 11M12.500 1.500l-11 11"/></svg>
            <span class="toast-circle"><svg width="36" height="36" viewBox="0 0 36 36" fill="none" stroke="#f2f2f6" stroke-width="1.700"><rect x="2" y="2" width="32" height="32" rx="5"/><path d="M2 9h32"/><g fill="#f2f2f6" stroke="none"><circle cx="13" cy="18" r="2.200"/><circle cx="20" cy="18" r="2.200"/><circle cx="27" cy="18" r="2.200"/><circle cx="13" cy="25" r="2.200"/><circle cx="20" cy="25" r="2.200"/></g></svg></span>
            <div class="toast-title">Infra DSU</div>
            <div class="toast-sub">Nall, Ryan started the meeting</div>
            <div class="toast-actions">
                <span class="toast-btn"><svg width="18" height="13" viewBox="0 0 18 13" fill="#fff"><rect x="0" y="0" width="12" height="13" rx="2.500"/><path d="M13 4l5-3v11l-5-3z"/></svg>Join</span>
                <span class="toast-btn"><svg width="18" height="18" viewBox="0 0 18 18" fill="none" stroke="#dcdce8" stroke-width="1.200"><path d="M9 1a8 8 0 1 1-4 15l-4 1 1-4A8 8 0 0 1 9 1zM6 7h6M6 10.500h4"/></svg>Message</span>
            </div>
        </div>

        <svg class="cursor" width="18" height="22" viewBox="0 0 18 22"><path d="M5 2c1-1 2 0 2 1v6l1-1c1 0 1 1 1 1l1-.5c1 0 1 1 1 1l1-.5c1.500 0 2 1 2 2v4c0 3-2 5-5 5-3 0-4-1-5-3L2 12c0-1 1-1.500 2-.5l1 1z" fill="#fff" stroke="#222" stroke-width="1"/></svg>
    </div>
</main>

<footer class="win11bar">
    <div></div>
    <div class="w11-apps">
        <span class="w11-app"><svg width="30" height="30" viewBox="0 0 30 30"><defs><linearGradient id="w11g" x1="0" y1="0" x2="1" y2="1"><stop offset="0" stop-color="#4fd0f8"/><stop offset="1" stop-color="#0a78d8"/></linearGradient></defs><path fill="url(#w11g)" d="M1 2a1 1 0 0 1 1-1h12v13H1zM16 1h12a1 1 0 0 1 1 1v12H16zM1 16h13v13H2a1 1 0 0 1-1-1zM16 16h13v12a1 1 0 0 1-1 1H16z"/></svg></span>
        <span class="w11-app"><svg width="30" height="30" viewBox="0 0 30 30" fill="none" stroke="#222" stroke-width="3"><circle cx="13" cy="13" r="10"/><path d="M20 21l7 7" stroke-width="3.500"/></svg></span>
        <span class="w11-app"><svg width="30" height="30"><use href="#i-edge"/></svg></span>
        <span class="w11-app w11-run"><svg width="32" height="32"><use href="#i-chrome"/></svg><span class="w11-badge"></span></span>
        <span class="w11-app w11-run"><svg width="30" height="30"><use href="#i-vscode"/></svg></span>
        <span class="w11-app w11-open"><svg width="30" height="30" viewBox="0 0 30 30"><rect width="30" height="30" fill="#ef443b"/><path d="M11 8l7 7-7 7-7-7z" fill="#fff"/><path d="M19 9l6 6-6 6-2.500-2.500L20 15l-3.500-3.500z" fill="#fff"/></svg></span>
    </div>
    <div class="w11-tray">
        <svg width="14" height="9" viewBox="0 0 14 9" fill="none" stroke="#222" stroke-width="1.500"><path d="M1 8l6-6.500L13 8"/></svg>
        <svg class="tray-cloud" width="22" height="16" viewBox="0 0 22 16"><path d="M6 15a5 5 0 0 1-1-10 7 7 0 0 1 12 2 4 4 0 0 1 0 8z" fill="#b5b5b5" stroke="#333" stroke-width="1.200"/></svg>
        <span class="tray-lang">ENG</span>
        <svg class="tray-wifi" width="20" height="16" viewBox="0 0 20 16" fill="none" stroke="#222" stroke-width="1.500"><path d="M1 5c5-5 13-5 18 0M4 8.500c3.500-3 8.500-3 12 0M7 12c2-1.500 4-1.500 6 0"/><circle cx="10" cy="14.500" r="1" fill="#222"/></svg>
        <svg class="tray-vol" width="18" height="18" viewBox="0 0 18 18" fill="none" stroke="#222" stroke-width="1.200"><path d="M1 6h3l4-4v14l-4-4H1zM11 6c1 2 1 4 0 6M14 4c2 3 2 7 0 10"/></svg>
        <svg class="tray-batt" width="20" height="18" viewBox="0 0 20 18"><rect x="1" y="5" width="16" height="10" fill="none" stroke="#222" stroke-width="1.500"/><rect x="3" y="7" width="9" height="6" fill="#222"/><path d="M5 0L3 6h3l-1 4" stroke="#222" fill="none"/></svg>
        <div class="w11-clock"><span>7:46 PM</span><span>1/24/2024</span></div>
        <svg width="18" height="22" viewBox="0 0 18 22" fill="none" stroke="#222" stroke-width="1.300"><path d="M3 16V9a6 6 0 0 1 12 0v7l2 2H1zM7 20c1 1.500 3 1.500 4 0M9 1v2"/></svg>
    </div>
</footer>
</body>
</html>
```

FILE: styles.css
```css
* {
    box-sizing: border-box;
}

body {
    margin: 0;
    width: 1920px;
    height: 1080px;
    overflow: hidden;
    display: flex;
    flex-direction: column;
    font-family: "Open Sans", "Noto Sans", sans-serif;
    background: #7f7f7f;
}

.defs {
    position: absolute;
}

button {
    font: inherit;
    border: 0;
    padding: 0;
}

/* anydesk frame */
.ad-title {
    height: 45px;
    flex: none;
    display: flex;
    align-items: center;
    background: #ebebeb;
    border-bottom: 1px solid #d6d6d6;
}

.ad-logo {
    margin-left: 7px;
}

.ad-name {
    margin-left: 6px;
    width: 85px;
    font-size: 17px;
    font-weight: 600;
    color: #222;
}

.ad-tab {
    width: 198px;
    height: 33px;
    display: flex;
    align-items: center;
    gap: 7px;
    padding-left: 10px;
    background: #fff;
    font-size: 15.700px;
    color: #444;
}

.ad-newtab {
    margin-left: 9px;
}

.win-ctrl {
    margin-left: auto;
    display: flex;
}

.win-ctrl span {
    width: 54px;
    display: flex;
    justify-content: center;
    align-items: center;
}

.ad-title .win-ctrl span:first-child {
    padding-right: 4px;
}

.win-ctrl-small span {
    width: 48px;
}

.ad-toolbar {
    height: 53px;
    flex: none;
    display: flex;
    align-items: center;
    background: #f8f8f8;
    position: relative;
}

.ad-ok {
    margin-left: 10px;
}

.ad-field {
    width: 1824px;
    height: 40px;
    margin-left: 9px;
    display: flex;
    align-items: center;
    background: #fff;
}

.ad-mon {
    margin-left: 14px;
}

.ad-sep {
    width: 1px;
    height: 22px;
    margin-left: 10px;
    background: #ddd;
}

.ad-addr {
    margin-left: 11px;
    font-size: 17.500px;
    color: #222;
}

.ad-tools {
    display: flex;
}

.ad-tools-dim {
    margin-left: auto;
    margin-right: 15px;
}

.ad-tools span {
    width: 40px;
    height: 40px;
    display: flex;
    justify-content: center;
    align-items: center;
    position: relative;
}

.ad-tools-dim span:last-child {
    width: 33px;
}

.ad-active::after {
    content: "";
    position: absolute;
    left: 2px;
    right: 2px;
    bottom: 0;
    height: 2px;
    background: #e8303a;
}

.ad-menu {
    margin-left: 16px;
}

/* remote desktop */
.desk {
    flex: 1;
    padding: 0 141px 0 140px;
    min-height: 0;
}

.chrome {
    position: relative;
    height: 922px;
    display: flex;
    flex-direction: column;
    border: 2px solid #4f8fcb;
    background: #fff;
}

.tabstrip {
    height: 41px;
    flex: none;
    display: flex;
    background: #d3e3fd;
    padding-top: 5px;
}

.tab-list {
    width: 29px;
    height: 28px;
    margin-left: 5px;
    border-radius: 9px;
    background: #e8f0fe;
}

.tab-active {
    width: 35px;
    margin-left: 7px;
    display: flex;
    align-items: center;
    justify-content: center;
    padding-bottom: 8px;
    background: #fff;
    border-radius: 10px 10px 0 0;
}

.tabs {
    display: flex;
    margin-left: 3px;
    height: 28px;
}

.tab {
    width: 30.750px;
    height: 28px;
    display: flex;
    align-items: center;
    justify-content: center;
    background: linear-gradient(#a9c4ef, #a9c4ef) right center / 2px 18px no-repeat;
}

.tab svg {
    width: 20px;
    height: 20px;
}

.ring svg {
    width: 12px;
    height: 12px;
    opacity: .8;
}

.ring {
    position: relative;
}

.ring::before {
    content: "";
    position: absolute;
    left: 4.500px;
    top: 4px;
    width: 20px;
    height: 20px;
    border: 1.500px dashed #8c939e;
    border-radius: 50%;
}

.plain svg {
    width: 18px;
    height: 18px;
}

.tab-text {
    font-family: "Liberation Mono", monospace;
    font-size: 10px;
    font-weight: 700;
    letter-spacing: -.4px;
    color: #3b78b8;
}

.ring-text {
    font-family: "Liberation Sans", sans-serif;
    font-size: 6px;
    font-weight: 700;
    color: #9298a3;
}

.ring-blue {
    color: #4c86c8;
}

.tab-new {
    margin: 7px 0 0 10px;
}

.tabstrip .win-ctrl {
    height: 28px;
}

.navbar {
    height: 42px;
    flex: none;
    display: flex;
    align-items: center;
    padding-top: 7px;
    padding-left: 13px;
    background: #fff;
}

.nav-btn {
    margin-right: 23px;
}

.nav-btn:nth-child(3) {
    margin-right: 19px;
}

.omnibox {
    width: 1286px;
    height: 35px;
    display: flex;
    align-items: center;
    border-radius: 18px;
    background: #e9eef8;
    padding-left: 8px;
}

.omni-tune {
    width: 24px;
    height: 24px;
    border-radius: 50%;
    background: #fff;
    display: flex;
    align-items: center;
    justify-content: center;
}

.omni-url {
    margin-left: 7px;
    font-size: 14px;
    color: #3d4043;
}

.omni-star {
    margin-left: auto;
    margin-right: 16px;
}

.nav-right {
    display: flex;
    align-items: center;
    margin-left: 19px;
}

.nav-right svg {
    flex: none;
}

.nav-sep {
    width: 1px;
    height: 24px;
    background: #c5d4ec;
    margin: 0 19px 0 18px;
}

.nav-right svg:nth-of-type(3) {
    margin: 0 20px;
}

.nav-avatar {
    width: 22px;
    height: 28px;
    border-radius: 11px;
    background: #d3e3fd;
    display: flex;
    align-items: center;
    justify-content: center;
    margin-right: 25px;
}

.bookmarks {
    height: 44px;
    flex: none;
    display: grid;
    grid-template-columns: 168px 166px 166px 161px 168px 151px 143px 166px 166px 24px 14px auto;
    align-items: center;
    padding-left: 10px;
    background: #fff;
    font-size: 12.250px;
    color: #45474a;
}

.bm {
    display: flex;
    align-items: center;
    gap: 7px;
    white-space: nowrap;
}

.bm svg {
    width: 17px;
    height: 17px;
    flex: none;
}

.bm-visa {
    width: 18px;
    height: 18px;
    flex: none;
    display: flex;
    align-items: center;
    justify-content: center;
    background: #1a3a8c;
    color: #fff;
    font-size: 6px;
    font-weight: 700;
}

.bm-awx {
    font-family: "Liberation Mono", monospace;
    font-size: 10px;
    font-weight: 700;
    color: #3b78b8;
    letter-spacing: -1px;
}

.bm-more {
    font-size: 18px;
    line-height: 1;
    padding: 0 0 4px 2px;
}

.bookmarks .nav-sep {
    margin: 0 auto;
}

.bm-all {
    margin-left: 12px;
}

/* keeper app, dimmed behind the dialog */
.app {
    height: 699px;
    flex: none;
    display: flex;
    overflow: hidden;
    background: #b1afb2;
    font-family: "Lato", sans-serif;
    color: #0d0d0f;
}

.rail {
    width: 75px;
    flex: none;
    display: flex;
    flex-direction: column;
    align-items: center;
    padding-right: 2px;
    background: #111013;
}

.rail-burger {
    margin-top: 31px;
}

.rail-add {
    width: 43px;
    height: 43px;
    margin-top: 30px;
    border-radius: 50%;
    background: #dba50c;
    display: flex;
    align-items: center;
    justify-content: center;
}

.rail-item {
    width: 51px;
    height: 47px;
    margin-top: 4px;
    display: flex;
    align-items: center;
    justify-content: center;
    border-radius: 8px;
}

.rail-active {
    margin-top: 19px;
    background: #99989b;
}

.vault {
    flex: 1;
    padding: 0 23px 0 26px;
    min-width: 0;
}

.vault-top {
    display: flex;
    align-items: center;
    height: 43px;
    margin-top: 17px;
}

.brand {
    width: 146px;
    display: flex;
    align-items: center;
    gap: 2px;
    margin-left: 3px;
}

.brand-text {
    display: flex;
    flex-direction: column;
    align-items: flex-end;
}

.brand-name {
    font-size: 23px;
    line-height: 23px;
    color: #4b4a50;
    letter-spacing: .4px;
}

.brand-sub {
    font-size: 7.500px;
    line-height: 9px;
    font-weight: 700;
    color: #6a696d;
}

.search {
    width: 341px;
    height: 43px;
    display: flex;
    align-items: center;
    gap: 12px;
    padding-left: 17px;
    border-radius: 8px;
    background: #a3a2a5;
    font-size: 16px;
    color: #4f4e52;
}

.filter {
    margin-left: 20px;
}

.user {
    margin-left: auto;
    display: flex;
    align-items: center;
    margin-right: 7px;
}

.avatar {
    width: 43px;
    height: 43px;
    border-radius: 50%;
    background: #b01c0c;
    color: #e8c8c4;
    font-size: 17px;
    display: flex;
    align-items: center;
    justify-content: center;
}

.email {
    margin-left: 9px;
    font-size: 17px;
    letter-spacing: .35px;
}

.caret {
    display: inline-block;
    width: 0;
    height: 0;
    margin-left: 9px;
    border-left: 5.500px solid transparent;
    border-right: 5.500px solid transparent;
    border-top: 6px solid #0d0d0f;
}

.caret-light {
    border-top-color: #b5b5b5;
}

.vault-title {
    margin: 18px 0 0;
    font-size: 21px;
    line-height: 30px;
    font-weight: 500;
    letter-spacing: .2px;
}

.vault-sort {
    display: flex;
    align-items: center;
    height: 38px;
    margin-top: 13px;
    font-size: 16.400px;
}

.sort-item {
    display: flex;
    align-items: center;
    white-space: nowrap;
}

.sort-item:first-child {
    width: 167px;
}

.sort-item .caret {
    margin-left: 8px;
}

.views {
    margin-left: auto;
    display: flex;
    align-items: center;
    margin-right: 11px;
}

.view-on {
    width: 39px;
    height: 38px;
    margin-right: 10px;
    border-radius: 8px;
    background: #0e50a0;
    display: flex;
    align-items: center;
    justify-content: center;
}

.views > svg:last-child {
    margin-left: 21px;
}

.records {
    list-style: none;
    margin: 11px 0 0;
    padding: 0;
    border-top: 1px solid #a09fa2;
}

.record {
    height: 69.300px;
    display: flex;
    align-items: center;
    padding-left: 51px;
    border-bottom: 1px solid #a09fa2;
}

.rec-icon {
    width: 42px;
    height: 43px;
    margin-right: 17px;
    border: 1px solid #9e9da0;
    border-radius: 9px;
    display: flex;
    align-items: center;
    justify-content: center;
    flex: none;
}

.rec-icon svg {
    width: 26px;
    height: 26px;
}

.rec-name {
    margin-top: 1px;
    font-size: 16.500px;
    line-height: 22px;
    font-weight: 600;
}

.rec-sub {
    margin-top: 1px;
    font-size: 16px;
    line-height: 22px;
    color: #58575b;
}

.rec-share {
    width: 20px;
    height: 20px;
    margin-left: auto;
    margin-right: 18px;
    fill: #66656a;
}

/* remote status bar and inner taskbar */
.remote-bar {
    height: 51px;
    flex: none;
    display: flex;
    align-items: center;
    padding-left: 15px;
    background: #282729;
}

.encryption {
    padding-bottom: 2px;
    font-family: "DejaVu Sans Mono", monospace;
    font-size: 16px;
    letter-spacing: 1.300px;
    color: #a8a8a8;
}

.sync {
    margin-left: auto;
    margin-right: 322px;
    display: flex;
    align-items: center;
    gap: 10px;
    font-size: 14.500px;
    color: #b5b5b5;
}

.sync .caret {
    margin-left: 0;
}

.win10bar {
    height: 41px;
    flex: none;
    display: flex;
    align-items: center;
    background: linear-gradient(90deg, #1c3b49, #1b3344 50%, #182d4a);
    color: #eee;
}

.start {
    width: 49px;
    display: flex;
    justify-content: center;
}

.w10-search {
    width: 308px;
    height: 41px;
    display: flex;
    align-items: center;
    padding-left: 12px;
    background: #f3f3f6;
    border: 1px solid #c9ccd0;
    border-bottom-color: #6f9ac0;
    font-size: 15.200px;
    color: #333;
}

.w10-search span:first-of-type {
    margin-left: 13px;
}

.w10-cal {
    margin-left: auto;
    width: 77px;
    height: 36px;
    margin-right: 4px;
    border-radius: 6px;
    background: #e1e1e4;
    display: flex;
    align-items: center;
    justify-content: center;
}

.w10-app {
    width: 53px;
    height: 41px;
    display: flex;
    align-items: center;
    justify-content: center;
    flex: none;
}

.w10-hl {
    background: #4f6874;
}

.w10-hl-orange {
    background: #a96a34;
}

.w10-tray {
    margin-left: auto;
    display: flex;
    align-items: center;
    gap: 8px;
    padding-right: 24px;
}

.tray-pen {
    margin-left: 5px;
}

.w10-clock {
    margin-left: 4px;
    width: 62px;
    display: flex;
    flex-direction: column;
    align-items: center;
    font-size: 12.500px;
    line-height: 19px;
    white-space: nowrap;
    padding-top: 2px;
}

.tray-note {
    margin-left: 8px;
}

/* recovery phrase dialog */
.modal {
    position: absolute;
    left: 561px;
    top: 212px;
    width: 513px;
    height: 580px;
    display: flex;
    background: #fff;
    border-radius: 6px;
    box-shadow: 0 4px 18px rgba(0, 0, 0, .3);
    font-family: "Lato", sans-serif;
    color: #111;
    overflow: hidden;
}

.modal-body {
    width: 496px;
    padding: 25px 27px 0 26px;
}

.modal-title {
    display: flex;
    align-items: center;
    gap: 9px;
    height: 24px;
    font-size: 20px;
    font-weight: 600;
    padding-left: 2px;
}

.modal-desc {
    margin: 17px 0 0;
    font-size: 16.500px;
    line-height: 24px;
}

.modal-label {
    margin-top: 23px;
    font-size: 16px;
    line-height: 20px;
    color: #707073;
}

.phrase {
    margin-top: 9px;
    padding: 8px 0 6px;
    border: 1px solid #dcdcdf;
    border-radius: 6px;
    background: #f1f1f4;
    font-family: "DejaVu Sans Mono", monospace;
    font-size: 17px;
    -webkit-text-stroke: .35px #111;
    line-height: 30px;
    text-align: center;
    color: #111;
}

.phrase-btns {
    display: flex;
    gap: 8px;
    margin-top: 17px;
}

.btn {
    height: 39px;
    border-radius: 8px;
    font-family: "Lato", sans-serif;
    font-size: 17px;
    display: flex;
    align-items: center;
    justify-content: center;
    gap: 12px;
    color: #fff;
}

.btn-copy {
    flex: 1;
    background: #1271de;
}

.btn-download {
    flex: 1;
    gap: 14px;
    background: #004896;
}

.alert {
    margin-top: 17px;
    height: 66px;
    display: flex;
    align-items: center;
    gap: 10px;
    padding: 0 14px 0 16px;
    border: 1px solid #b5323f;
    border-radius: 8px;
    background: #fdeaec;
    color: #b81d2b;
    font-size: 16.200px;
    font-weight: 700;
    line-height: 25px;
}

.alert svg {
    flex: none;
}

.stored {
    margin-top: 18px;
    height: 24px;
    display: flex;
    align-items: center;
    gap: 12px;
    padding-left: 3px;
    font-size: 16.500px;
}

.check {
    width: 20px;
    height: 20px;
    border-radius: 3px;
    background: #1271de;
    display: flex;
    align-items: center;
    justify-content: center;
}

.modal-actions {
    margin-top: 35px;
    display: flex;
    justify-content: flex-end;
    gap: 8px;
}

.btn-cancel {
    width: 83px;
    height: 38px;
    background: #f1f1f4;
    color: #111;
    font-size: 16px;
    padding-bottom: 2px;
}

.btn-set {
    width: 183px;
    height: 38px;
    background: #ffc000;
    color: #111;
    font-size: 16px;
    font-weight: 700;
    padding-bottom: 2px;
}

.modal-scroll {
    width: 17px;
    display: flex;
    flex-direction: column;
    align-items: center;
    padding-right: 1px;
    background: #fff;
}

.scroll-thumb {
    flex: 1;
    width: 15px;
    background: #b6b5b8;
}

.arrow-up, .arrow-down {
    width: 0;
    height: 0;
    border-left: 5px solid transparent;
    border-right: 5px solid transparent;
}

.arrow-up {
    border-bottom: 5px solid #a5a5a5;
    margin: 6px 0 7px;
}

.arrow-down {
    border-top: 5px solid #555;
    margin: 10px 0 11px;
}

/* teams toast */
.toast {
    position: absolute;
    left: 1308px;
    top: 634px;
    width: 322px;
    height: 234px;
    display: flex;
    flex-direction: column;
    align-items: center;
    background: #3e3f78;
    color: #fff;
    font-family: "Open Sans", sans-serif;
}

.toast-close {
    position: absolute;
    right: 20px;
    top: 14px;
}

.toast-circle {
    width: 76px;
    height: 76px;
    margin-top: 30px;
    border-radius: 50%;
    background: #35365f;
    display: flex;
    align-items: center;
    justify-content: center;
}

.toast-title {
    margin-top: 19px;
    font-size: 14.500px;
    font-weight: 600;
    line-height: 22px;
}

.toast-sub {
    margin-top: 2px;
    font-size: 14.500px;
    font-weight: 300;
    line-height: 22px;
    color: #dcdcec;
}

.toast-actions {
    margin-top: auto;
    width: 100%;
    height: 38px;
    display: flex;
    gap: 5px;
}

.toast-btn {
    flex: 1;
    display: flex;
    align-items: center;
    justify-content: center;
    gap: 14px;
    padding-left: 6px;
    background: #34335f;
    font-size: 14px;
    color: #c9c9da;
}

.cursor {
    position: absolute;
    left: 848px;
    top: 568px;
}

/* local windows 11 taskbar */
.win11bar {
    height: 60px;
    flex: none;
    display: grid;
    grid-template-columns: 1fr auto 1fr;
    align-items: center;
    background: linear-gradient(90deg, #e8eff9, #dbe5f9 45%, #e6edf8 80%, #dfe7f6);
}

.w11-apps {
    display: flex;
    margin-left: 2px;
}

.w11-app {
    width: 55px;
    height: 60px;
    display: flex;
    align-items: center;
    justify-content: center;
    position: relative;
}

.w11-run::after, .w11-open::after {
    content: "";
    position: absolute;
    left: 50%;
    bottom: 4px;
    width: 6px;
    height: 6px;
    margin-left: -3px;
    border-radius: 50%;
    background: #6f6f73;
}

.w11-open::before {
    content: "";
    position: absolute;
    left: 3px;
    top: 6px;
    width: 48px;
    height: 48px;
    border-radius: 5px;
    background: #f2f5fb;
    box-shadow: 0 1px 2px rgba(0, 0, 0, .15);
}

.w11-open svg {
    position: relative;
}

.w11-open::after {
    width: 20px;
    height: 5px;
    margin-left: -12px;
    border-radius: 3px;
    background: #0b74d1;
}

.w11-badge {
    position: absolute;
    right: 6px;
    top: 9px;
    width: 17px;
    height: 24px;
    border-radius: 9px;
    background: #8c7d96;
}

.w11-tray {
    display: flex;
    align-items: center;
    justify-content: flex-end;
    padding-right: 25px;
    gap: 11px;
    color: #222;
}

.tray-cloud {
    margin-left: 11px;
}

.tray-lang {
    margin-left: 11px;
    font-size: 14px;
}

.tray-wifi {
    margin-left: 13px;
}

.tray-vol {
    margin-left: -2px;
}

.tray-batt {
    margin-left: 2px;
}

.w11-clock {
    margin-left: 12px;
    display: flex;
    flex-direction: column;
    align-items: flex-end;
    font-size: 14px;
    line-height: 21px;
}
```
